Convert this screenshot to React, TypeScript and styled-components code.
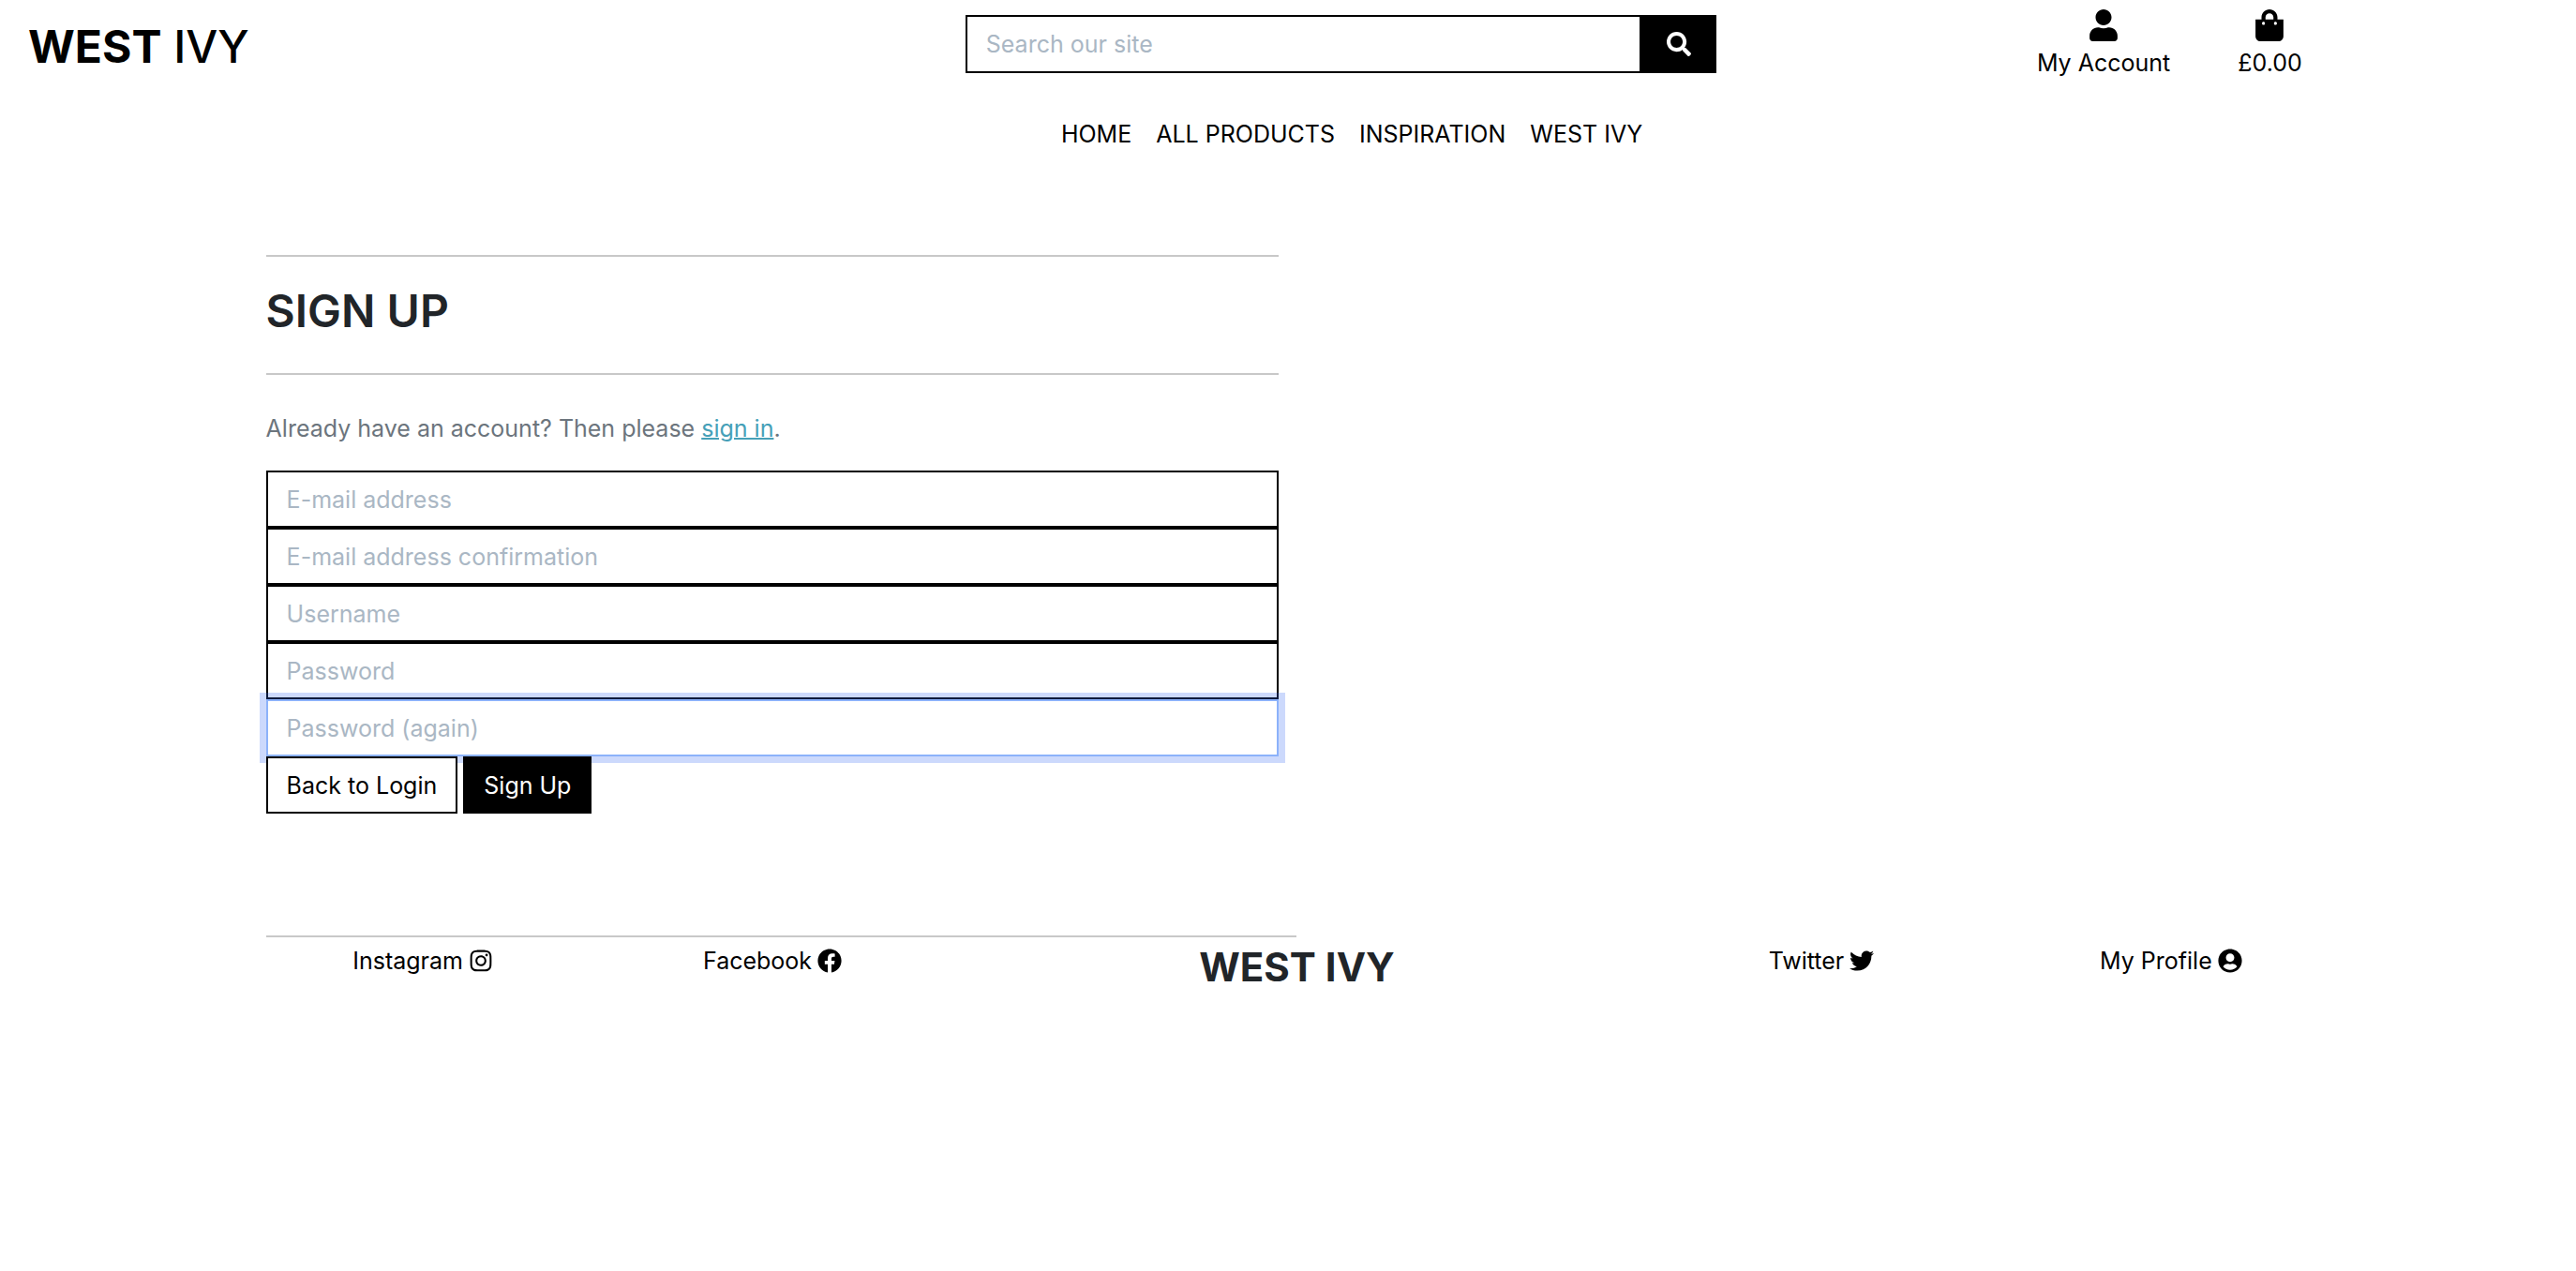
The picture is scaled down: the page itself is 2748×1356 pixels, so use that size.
import React from "react";
import styled, { createGlobalStyle, css } from "styled-components";
import {
  FaFacebook,
  FaInstagram,
  FaSearch,
  FaShoppingBag,
  FaTwitter,
  FaUser,
  FaUserCircle,
} from "react-icons/fa";

const GlobalStyle = createGlobalStyle`
  *, *::before, *::after { box-sizing: border-box; }
  body {
    margin: 0;
    background: #fff;
    color: #212529;
    font-family: Inter, "Liberation Sans", sans-serif;
    font-size: 25px;
    line-height: 38px;
  }
  a { color: #000; text-decoration: none; }
  svg { display: block; width: auto; height: 1em; }
`;

const Header = styled.header`
  display: grid;
  grid-template-columns: repeat(3, 1fr);
  align-items: start;
  padding-right: 2px;
`;

const Logo = styled.a`
  padding: 20px 30px 0;
  font-size: 48px;
  font-weight: 500;
  line-height: 60px;

  strong { font-weight: 700; }
`;

const SearchForm = styled.form`
  display: flex;
  width: 87.5%;
  height: 62px;
  margin: 16px 0 0 auto;
`;

const fieldStyle = css`
  min-width: 0;
  padding: 0 20px;
  border: 2px solid #000;
  border-radius: 0;
  background: #fff;
  color: #000;
  font: inherit;
  outline: none;

  &::placeholder {
    color: #aab7c4;
    opacity: 1;
  }
`;

const SearchInput = styled.input`
  ${fieldStyle}
  flex: 1;
`;

const SearchButton = styled.button`
  display: flex;
  align-items: center;
  justify-content: center;
  width: 80px;
  padding: 0;
  border: 0;
  background: #000;
  color: #fff;
  font-size: 26px;
`;

const AccountLinks = styled.nav`
  display: flex;
  justify-content: center;
  gap: 72px;
  padding: 10px 0 0 52px;
`;

const AccountLink = styled.a`
  display: flex;
  flex-direction: column;
  align-items: center;
  gap: 4px;

  svg { font-size: 34px; }
`;

const MainNav = styled.nav`
  grid-column: 1 / -1;
  display: flex;
  justify-content: center;
  gap: 26px;
  margin-top: 38px;
  padding-left: 138px;
`;

const Container = styled.div`
  padding-left: 19px;
`;

const Row = styled.div`
  width: 82%;
  max-width: 2238px;
  margin: 0 auto;
`;

const Content = styled.main`
  width: 50%;
  padding: 110px 19px 0;
`;

const Rule = styled.hr`
  height: 2px;
  margin: 0;
  border: 0;
  background: #c8c8c8;
`;

const Title = styled.h1`
  margin: 28px 0 36px;
  font-size: 48px;
  font-weight: 600;
  line-height: 60px;
`;

const Hint = styled.p`
  margin: 38px 0 26px;
  color: #6c757d;

  a {
    color: #46a0b8;
    text-decoration: underline;
    text-decoration-thickness: 2px;
  }
`;

const Fields = styled.div`
  display: grid;
`;

const Field = styled.input`
  ${fieldStyle}
  height: 61px;

  &:focus {
    border-color: #8cb2fa;
    box-shadow: 0 0 0 7px rgba(50, 105, 245, 0.25);
    caret-color: transparent;
  }
`;

const Actions = styled.div`
  position: relative;
  display: flex;
  gap: 6px;
`;

const buttonStyle = css`
  display: flex;
  align-items: center;
  height: 61px;
  padding: 0 20px;
  border: 2px solid #000;
  font: inherit;
`;

const LinkButton = styled.a`
  ${buttonStyle}
  background: #fff;
  color: #000;
`;

const SubmitButton = styled.button`
  ${buttonStyle}
  background: #000;
  color: #fff;
`;

const FooterRule = styled(Rule)`
  width: calc(50% - 19px);
  margin: 130px 0 0 19px;
`;

const FooterColumns = styled.footer`
  display: grid;
  grid-template-columns: 2fr 2fr 4fr 2fr 2fr;
  justify-items: center;
  align-items: start;
  padding-top: 6px;
`;

const FooterLink = styled.a`
  display: flex;
  align-items: center;
  gap: 6px;

  svg { font-size: 26px; }
`;

const FooterBrand = styled.h2`
  margin: 0;
  font-size: 42px;
  font-weight: 700;
  line-height: 52px;
`;

const fields = [
  { name: "email", type: "email", label: "E-mail address" },
  { name: "email2", type: "email", label: "E-mail address confirmation" },
  { name: "username", type: "text", label: "Username" },
  { name: "password1", type: "password", label: "Password" },
  { name: "password2", type: "password", label: "Password (again)" },
];

export default function App() {
  return (
    <>
      <GlobalStyle />
      <Header>
        <Logo href="#home">
          <strong>WEST</strong> IVY
        </Logo>
        <SearchForm role="search">
          <SearchInput type="text" name="q" placeholder="Search our site" aria-label="Search our site" />
          <SearchButton type="submit" aria-label="Search">
            <FaSearch />
          </SearchButton>
        </SearchForm>
        <AccountLinks aria-label="Account">
          <AccountLink href="#account">
            <FaUser />
            My Account
          </AccountLink>
          <AccountLink href="#bag">
            <FaShoppingBag />
            £0.00
          </AccountLink>
        </AccountLinks>
        <MainNav aria-label="Main">
          <a href="#home">HOME</a>
          <a href="#products">ALL PRODUCTS</a>
          <a href="#inspiration">INSPIRATION</a>
          <a href="#about">WEST IVY</a>
        </MainNav>
      </Header>

      <Container>
        <Row>
          <Content>
            <Rule />
            <Title>SIGN UP</Title>
            <Rule />
            <Hint>
              Already have an account? Then please <a href="#login">sign in</a>.
            </Hint>
            <form>
              <Fields>
                {fields.map((field) => (
                  <Field
                    key={field.name}
                    name={field.name}
                    type={field.type}
                    placeholder={field.label}
                    aria-label={field.label}
                    autoFocus={field.name === "password2"}
                  />
                ))}
              </Fields>
              <Actions>
                <LinkButton href="#login">Back to Login</LinkButton>
                <SubmitButton type="submit">Sign Up</SubmitButton>
              </Actions>
            </form>
          </Content>
          <FooterRule />
          <FooterColumns>
            <FooterLink href="#instagram">
              Instagram <FaInstagram />
            </FooterLink>
            <FooterLink href="#facebook">
              Facebook <FaFacebook />
            </FooterLink>
            <FooterBrand>WEST IVY</FooterBrand>
            <FooterLink href="#twitter">
              Twitter <FaTwitter />
            </FooterLink>
            <FooterLink href="#profile">
              My Profile <FaUserCircle />
            </FooterLink>
          </FooterColumns>
        </Row>
      </Container>
    </>
  );
}
